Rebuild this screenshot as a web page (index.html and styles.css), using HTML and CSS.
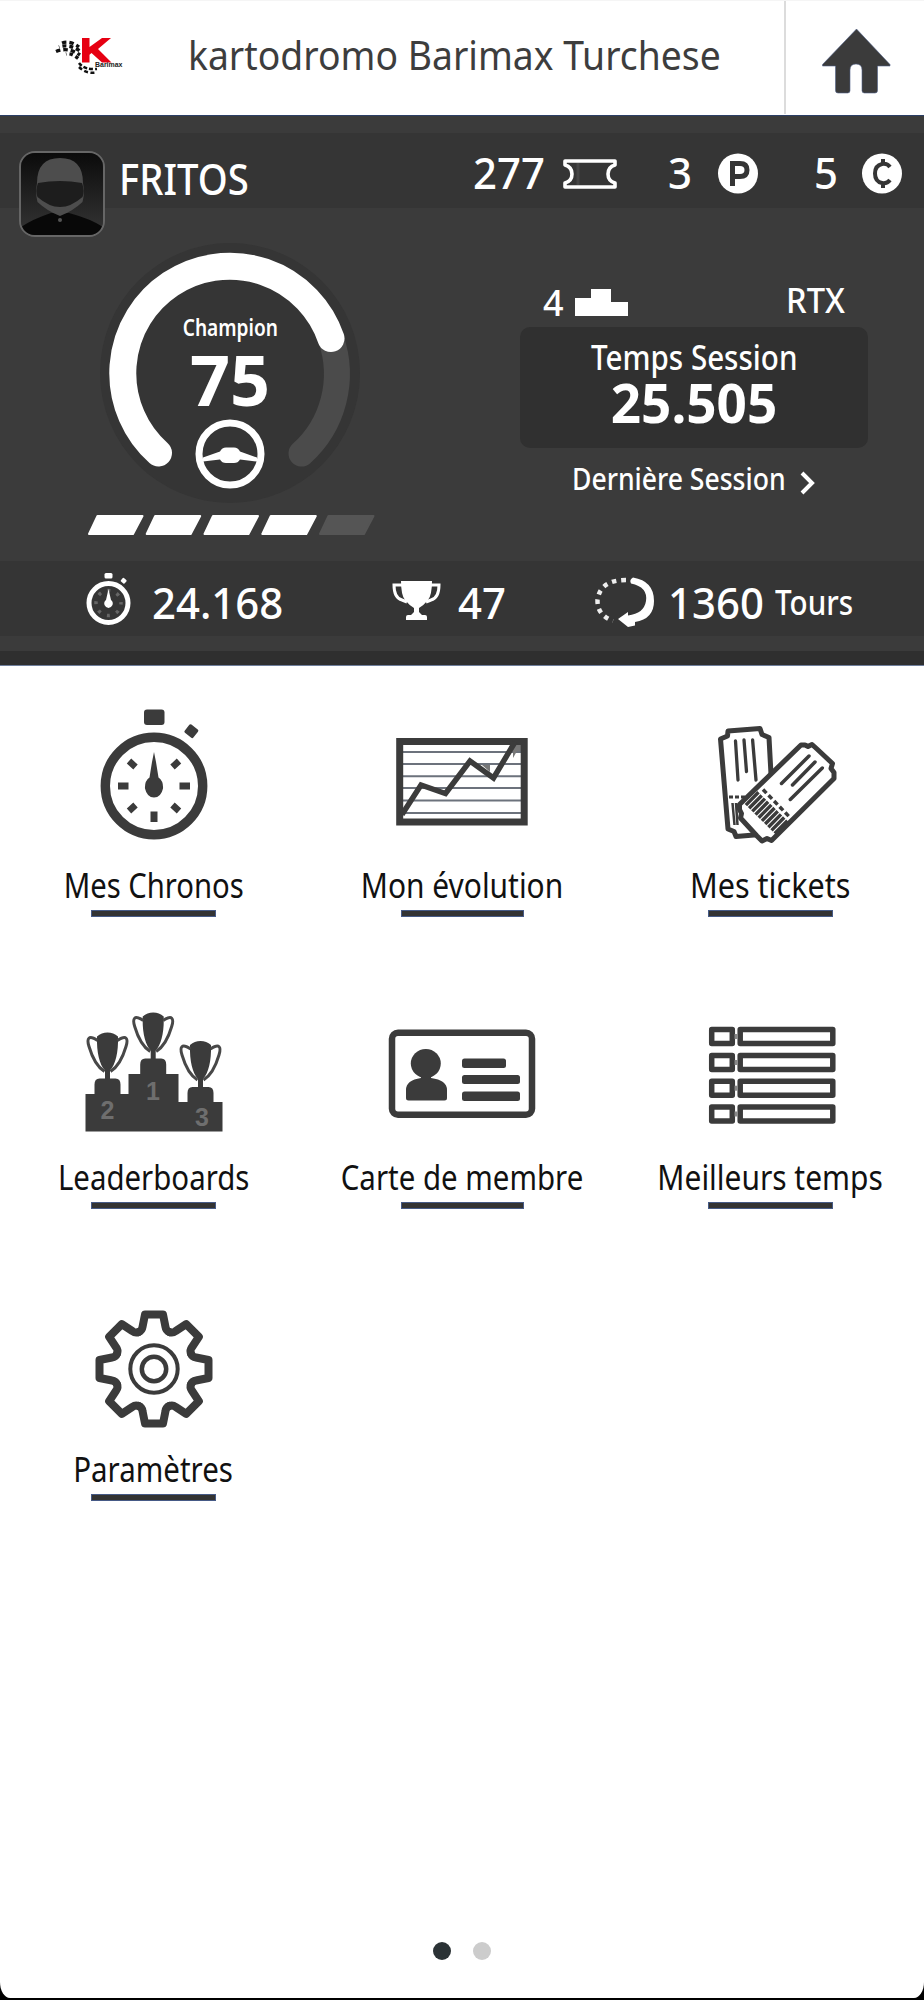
FILE: index.html
```html
<!DOCTYPE html>
<html lang="fr">
<head>
<meta charset="utf-8">
<title>kartodromo Barimax Turchese</title>
<link rel="stylesheet" href="styles.css">
</head>
<body>
<div class="app">
  <header class="header">
    <svg class="logo" width="68" height="38" viewBox="55 37 68 38">
      <g fill="none" stroke="#111" stroke-width="3.4">
        <path d="M62 43Q70 40 79 47" stroke-dasharray="4.500 3"/>
        <path d="M59 47Q69 43.500 80 51" stroke-dasharray="4 3" stroke-dashoffset="3.500"/>
        <path d="M56 51.500Q68 46.500 80 55" stroke-dasharray="4.500 3"/>
        <path d="M66 54Q72 52.500 80 60" stroke-dasharray="3.500 3" stroke-dashoffset="3"/>
        <path d="M79 63Q84 70 97 69" stroke-width="2.500" stroke-dasharray="4 2"/>
        <path d="M79 67Q86 74 96 72.500" stroke-width="2.500" stroke-dasharray="4 2.500"/>
      </g>
      <path fill="#e60012" d="M82 38h7.500v9L102 38h9L98 49l13.500 13.500H102L91.500 53l-2 1.700v7.800H82z"/>
      <text class="logo-text" x="95" y="66.500" textLength="27.500" lengthAdjust="spacingAndGlyphs">Barimax</text>
    </svg>
    <h1 class="title">kartodromo Barimax Turchese</h1>
    <a class="home">
      <svg width="70" height="66" viewBox="821 28 70 66"><path fill="#3b3b3b" stroke="#50618a" stroke-width=".6" d="M856.500 29 890 64.500V66h-12.500v24.500q0 2.500-2.500 2.500h-10.500q-2.500 0-2.500-2.500V70q0-6-6-6t-6 6v20.500q0 2.500-2.500 2.500H838q-2.500 0-2.500-2.500V66H822.500v-1.500z"/></svg>
    </a>
  </header>

  <section class="panel">
    <div class="band topbar">
      <div class="avatar">
        <svg width="82" height="82" viewBox="0 0 82 82">
          <defs><linearGradient id="bg" x1="0" y1="0" x2="0" y2="1"><stop offset="0" stop-color="#0b0b0b"/><stop offset="1" stop-color="#353535"/></linearGradient></defs>
          <rect width="82" height="82" fill="url(#bg)"/>
          <path fill="#080808" d="M0 74Q12 66 30 60h18q22 6 34 14v8H0z"/>
          <path fill="#4d4d4d" d="M16 30Q16 5 39 5t23 25q2 10-.5 19Q52 58 39 63 26 58 16.500 49q-2.500-9-.5-19z"/>
          <path fill="#1d1d1d" d="M17 30q22-4 44 0 3 8 .5 14Q50 54 39 54T16.500 44Q14 38 17 30z"/>
          <circle cx="39" cy="67" r="2" fill="#555"/>
        </svg>
      </div>
      <span class="name">FRITOS</span>
      <span class="num">277</span>
      <svg class="ico" width="54" height="30" viewBox="0 0 54 30"><path fill="#353535" stroke="#fff" stroke-width="3.600" stroke-linejoin="round" d="M2 2h50v4q-7 2-7 9t7 9v4H2v-4q7-2 7-9T2 6z"/><path stroke="#454545" stroke-width="3" d="M15 4v22"/></svg>
      <span class="num">3</span>
      <svg class="ico" width="41" height="41" viewBox="0 0 41 41"><circle cx="20" cy="20.500" r="20" fill="#fff"/><path d="M14.500 33V10.500H22q7 0 7 6.500t-7 6.500h-7.500" fill="none" stroke="#353535" stroke-width="5"/></svg>
      <span class="num">5</span>
      <svg class="ico" width="41" height="41" viewBox="0 0 41 41"><circle cx="20" cy="20.500" r="20" fill="#fff"/><path d="M28 14q-3-4-8-3-7 1.500-7 9.500t7 9.500q5 1 8-3M21 6v6M21 29v6" fill="none" stroke="#353535" stroke-width="4"/></svg>
    </div>

    <div class="middle">
      <div class="rank">
        <div class="gauge">
          <svg class="dial" width="260" height="260" viewBox="100 243 260 260" fill="none">
            <circle cx="230" cy="373" r="130" fill="#353535"/>
            <path d="M331 339A107 107 0 0 1 301.500 453.500" stroke="#4b4b4b" stroke-width="26" stroke-linecap="round"/>
            <path d="M158.500 453A107 107 0 1 1 331 338.500" stroke="#fff" stroke-width="27" stroke-linecap="round"/>
            <circle cx="230" cy="454" r="31" stroke="#fff" stroke-width="7"/>
            <path fill="#fff" d="M203 457.500l17-6q2-4 6-4h8q4 0 6 4l17 6v4l-17-2q-2 3.500-6 3.500h-8q-4 0-6-3.500l-17 2z"/>
          </svg>
          <div class="gauge-text">
            <span class="level">Champion</span>
            <strong class="score">75</strong>
          </div>
        </div>
        <svg class="segments" width="288" height="20" viewBox="0 0 288 20">
          <defs><path id="seg" stroke-width="2" stroke-linejoin="round" d="M9.500 1H54.500L45 19H1z"/></defs>
          <g fill="#fff" stroke="#fff"><use href="#seg"/><use href="#seg" x="57.700"/><use href="#seg" x="115.500"/><use href="#seg" x="173.300"/></g>
          <use href="#seg" x="231" fill="#555" stroke="#555"/>
        </svg>
      </div>
      <div class="session">
        <div class="session-top">
          <span class="place">4</span>
          <svg class="podium" width="53" height="27" viewBox="0 0 53 27"><path fill="#fff" d="M0 9h16V0h20v13h17v14H0z"/></svg>
          <span class="kart">RTX</span>
        </div>
        <div class="time-box">
          <span class="time-label">Temps Session</span>
          <strong class="time">25.505</strong>
        </div>
        <a class="last">
          <span class="last-text">Dernière Session</span>
          <svg class="chevron" width="16" height="24" viewBox="0 0 16 24"><path d="M2 2l10 10L2 22" fill="none" stroke="#fff" stroke-width="4"/></svg>
        </a>
      </div>
    </div>

    <div class="band stats">
      <svg width="46" height="52" viewBox="86 573 46 52">
        <circle cx="108.500" cy="603" r="19.500" fill="none" stroke="#fff" stroke-width="5"/>
        <rect x="104.500" y="573" width="8" height="5.500" rx="1.500" fill="#fff"/><rect x="121" y="578.500" width="5" height="4.500" rx="1" fill="#fff" transform="rotate(40 123.500 581)"/>
        <circle cx="108.500" cy="603" r="12.500" fill="none" stroke="#666" stroke-width="3.500" stroke-dasharray="3 6.820" stroke-dashoffset="1.500"/>
        <path fill="#fff" d="M108.500 589l2.500 11q2.500 2 1.500 5-1.500 3-4 3t-4-3q-1-3 1.500-5z"/>
      </svg>
      <span class="num">24.168</span>
      <svg width="49" height="39" viewBox="0 0 49 39"><path fill="#fff" d="M9 0h31q0 14-4 19-4 5-9 8v4l3 3h3q2 0 2 2v3H14v-3q0-2 2-2h3l3-3v-4q-5-3-9-8Q9 14 9 0z"/><path fill="none" stroke="#fff" stroke-width="3" d="M11 4H2q0 13 8 15l5 2M38 4h9q0 13-8 15l-5 2"/></svg>
      <span class="num">47</span>
      <svg width="60" height="50" viewBox="595 577 60 50" fill="none">
        <path d="M633 577.500q21 3.500 21 23.500 0 18-19 21v3.500l-7 1.500-10-8 10-7v3.500q16-2 18-14.500Q648 587 631 583.500q-2-4 2-6z" fill="#fff"/>
        <path d="M626 580Q600 580 597.500 600 597 615 613 621" stroke="#eee" stroke-width="4.500" stroke-dasharray="4.500 5"/>
      </svg>
      <span class="num">1360</span>
      <span class="unit">Tours</span>
    </div>
  </section>

  <main class="menu">
    <a class="item">
      <svg class="glyph" viewBox="73.500 697 160 160">
        <circle cx="153.500" cy="786" r="48.700" fill="none" stroke="#3b3b3b" stroke-width="9.400"/>
        <rect x="143.500" y="709.500" width="20.500" height="15.500" rx="3" fill="#3b3b3b"/>
        <rect x="185.500" y="726" width="11" height="10.500" rx="1.500" transform="rotate(38 191 731)" fill="#3b3b3b"/>
        <path d="M153.500 752l2 10 2.500 15.500q5 3.500 4.500 11-2 9-9 9t-9-9q-.5-7.500 4.500-11L151.500 762z" fill="#3b3b3b"/>
        <g stroke="#3b3b3b" stroke-width="7"><path d="M153.500 811.500v10.500M117.500 786h10.500M179 786h10.500"/><path d="M128.500 761l6.500 6M178.500 761l-6.500 6M128.500 811l6.500-6M178.500 811l-6.500-6" stroke-width="6.500"/></g>
      </svg>
      <span class="label fit-chronos">Mes Chronos</span><i class="bar"></i>
    </a>
    <a class="item">
      <svg class="glyph" viewBox="382 697 160 160" fill="none" stroke="#3b3b3b">
        <path stroke="#6c727c" stroke-width="2" d="M402 752h122M402 764h122M402 776.300h122M402 788h122M402 800.500h122M402 813h122"/>
        <path fill="#777" stroke="none" d="M513 744h10v7h-6l-4 7zM482 765h8v7z"/>
        <rect x="399.700" y="741.500" width="124.500" height="80.500" stroke-width="7"/>
        <path stroke-width="5.500" d="M402 814.500L421 785l24.500 8.500L470 761l23.500 17L515 742"/>
      </svg>
      <span class="label fit-evolution">Mon évolution</span><i class="bar bar-mid"></i>
    </a>
    <a class="item">
      <svg class="glyph" viewBox="690 697 160 160" fill="#fff" stroke="#3b3b3b" stroke-width="5" stroke-linejoin="round">
        <path d="M727 731l32-2.500 2 6 7 3 5 92-20 5.500-18 1.500-2-5-6-2.500-7.500-90 7-3z"/>
        <path stroke-width="3.300" stroke-linecap="round" d="M734.500 741l2.500 39M743 740l2.500 31.500M751.600 740l3.400 40"/>
        <path stroke-width="3" d="M728 797h22" stroke-dasharray="4 2"/><path stroke-width="2.500" d="M731.500 803l2 22M735 803l1.500 22"/>
        <path d="M800 745h4l3 1.500 4-2 5 4.500 15.500 14.500-1.500 5 3 4v6l-62.500 62-4.500-2-5 2.500-5-5-16.500-18 1-4.500-2-4v-5z"/>
        <g stroke-width="3.500" stroke-linecap="round"><path d="M808 756l-27.500 27.500M814 762l-22.500 23M821.300 768l-32 31.500"/></g>
        <path d="M762 789.500l26 27" stroke-dasharray="5 3" stroke-width="3.500"/>
        <path d="M750 797.500l32 31.500" stroke-width="18" stroke-dasharray="3.400 1.100"/>
      </svg>
      <span class="label fit-tickets">Mes tickets</span><i class="bar"></i>
    </a>
    <a class="item">
      <svg class="glyph" viewBox="73.500 989 160 160" fill="#3b3b3b">
        <defs><g id="cup"><path d="M-10.500 4Q-6 0 0 0t10.500 4C11 20 8 32 2.500 38v8h-5v-8C-8 32-11 20-10.500 4zM-13 61.500V52q0-6 5-6H8q5 0 5 6v9.500z"/><path fill="none" stroke="#484848" stroke-width="3" d="M-10 8C-19 2-21 6-18.500 14-15 26-11 34-3 39M10 8C19 2 21 6 18.500 14 15 26 11 34 3 39"/></g></defs>
        <use href="#cup" x="152.700" y="1012.500"/><use href="#cup" x="107" y="1032.500"/><use href="#cup" x="200" y="1041"/>
        <path d="M85 1094h43v-20h50v28h44v29.500H85z"/>
        <g class="steps"><text x="107" y="1119">2</text><text x="152.500" y="1100">1</text><text x="201.500" y="1126">3</text></g>
      </svg>
      <span class="label fit-leader">Leaderboards</span><i class="bar"></i>
    </a>
    <a class="item">
      <svg class="glyph" viewBox="382 989 160 160" fill="#3b3b3b">
        <rect x="392" y="1032.700" width="140" height="82" rx="6" fill="none" stroke="#3b3b3b" stroke-width="6.500"/>
        <ellipse cx="425.800" cy="1063.500" rx="15" ry="14.500"/>
        <path d="M421 1074h10v4q16 2 16 12v8q0 2.500-2.500 2.500h-36q-2.500 0-2.500-2.500v-8q0-10 15-12z"/>
        <rect x="462" y="1058.500" width="44" height="9.500" rx="2.500"/><rect x="462" y="1075" width="58" height="9" rx="2.500"/><rect x="462" y="1091.500" width="58" height="9.500" rx="2.500"/>
      </svg>
      <span class="label fit-carte">Carte de membre</span><i class="bar bar-mid"></i>
    </a>
    <a class="item">
      <svg class="glyph" viewBox="690 989 160 160">
        <defs><g id="row" fill="none" stroke="#3b3b3b" stroke-width="5.500" stroke-linejoin="round"><path d="M710.700 3h20.600v14h-20.600zM739.200 3h92.600v14h-92.600z"/><path stroke="#888" stroke-width="5" d="M733.500 10h3"/></g></defs>
        <use href="#row" y="1026.500"/><use href="#row" y="1052.500"/><use href="#row" y="1078.200"/><use href="#row" y="1104"/>
      </svg>
      <span class="label fit-temps">Meilleurs temps</span><i class="bar"></i>
    </a>
    <a class="item">
      <svg class="glyph" viewBox="-80 -88 160 160" fill="none" stroke="#3b3b3b" stroke-linejoin="round" stroke-linecap="round">
        <defs><path id="tooth" d="M-15.300-37Q-12-38.400-11.500-42L-9-54.500H9L11.500-42Q12-38.400 15.300-37"/></defs>
        <g stroke-width="8"><use href="#tooth"/><use href="#tooth" transform="rotate(45)"/><use href="#tooth" transform="rotate(90)"/><use href="#tooth" transform="rotate(135)"/><use href="#tooth" transform="rotate(180)"/><use href="#tooth" transform="rotate(225)"/><use href="#tooth" transform="rotate(270)"/><use href="#tooth" transform="rotate(315)"/></g>
        <circle r="23.700" stroke-width="4"/><circle r="12.200" stroke-width="4.500"/>
      </svg>
      <span class="label fit-param">Paramètres</span><i class="bar"></i>
    </a>
  </main>

  <nav class="dots"><i class="dot dot-on"></i><i class="dot"></i></nav>
</div>
</body>
</html>
```
FILE: styles.css
```css
* { box-sizing: border-box; }
body { margin: 0; background: #000; font-family: "Noto Sans", "Open Sans", sans-serif; }
svg { display: block; flex: none; }

.app {
  width: 924px; height: 1998px; background: #fff;
  border-radius: 0 0 10px 10px / 0 0 16px 16px;
  display: flex; flex-direction: column; overflow: hidden;
}

.header { height: 115px; display: flex; border-top: 1px solid #f5f5f5; flex: none; }
.logo { margin: 36px 0 0 55px; }
.logo-text { font: bold 6.500px "Liberation Sans", sans-serif; fill: #222; }
.title {
  margin: 27px 0 0 65px; width: 596px; height: 58px; line-height: 54px;
  font-size: 40px; font-weight: 400; color: #3d3d3d; white-space: nowrap;
  transform: scaleX(.933); transform-origin: left;
}
.home { width: 140px; height: 113px; border-left: 2px solid #dcdcdc; padding: 27px 0 0 35px; }

.panel {
  height: 550px; flex: none; background: #3b3b3b; color: #fff;
  border-top: 1px solid #2c3f66; border-bottom: 14px solid #2f2f2f;
  padding-top: 17px; box-shadow: 0 1px #6f7f9c;
}
.band { height: 75px; background: #353535; display: grid; }
.num {
  font-size: 43px; font-weight: 500; line-height: 75px; padding-top: 2px;
  transform: scaleX(.975); transform-origin: left;
}

.topbar {
  grid-template-columns: 100px 354px 90px 105px 49.500px 96.500px 48px 41px;
  padding-left: 19px; align-items: start;
}
.avatar {
  width: 86px; height: 86px; margin-top: 18px; position: relative; z-index: 1;
  border: 2px solid #666; border-radius: 16px; overflow: hidden;
}
.name {
  font-size: 43px; font-weight: 500; line-height: 75px; padding-top: 8px;
  transform: scaleX(.89); transform-origin: left;
}
.ico { margin-top: 20px; }
.ico[height="30"] { margin-top: 26px; }

.middle { height: 353px; display: flex; }
.rank { width: 520px; padding: 35px 0 0 88px; }
.gauge { display: grid; width: 260px; height: 260px; margin-left: 12px; }
.dial, .gauge-text { grid-area: 1 / 1; }
.gauge-text { padding-top: 71px; display: flex; flex-direction: column; align-items: center; }
.level { font-size: 23px; font-weight: 600; line-height: 26px; transform: scaleX(.83); }
.score { font-size: 70px; line-height: 60px; margin-top: 9px; }
.segments { margin-top: 12px; }

.session { width: 348px; padding-top: 76px; }
.session-top { height: 43px; display: flex; align-items: flex-start; padding-left: 23px; }
.place { width: 32px; font-size: 36px; font-weight: 500; line-height: 37px; }
.podium { margin-top: 5px; }
.kart { margin: -1px 0 0 158px; font-size: 34px; font-weight: 500; line-height: 34px; transform: scaleX(.96); transform-origin: left; }
.time-box {
  height: 121px; border-radius: 10px; background: #303030; padding-top: 10px;
  display: flex; flex-direction: column; align-items: center;
}
.time-label { font-size: 35px; font-weight: 500; line-height: 40px; transform: scaleX(.845); }
.time { font-size: 53px; line-height: 50px; margin-top: 1px; }
.last { display: flex; padding: 12px 0 0 52px; }
.last-text {
  width: 228px; font-size: 31px; font-weight: 500; line-height: 36px; white-space: nowrap;
  transform: scaleX(.857); transform-origin: left;
}
.chevron { margin-top: 11px; }

.stats {
  grid-template-columns: 66px 240px 66px 137px 73px 107px 80px;
  padding-left: 86px; align-items: start;
}
.stats svg { margin-top: 12px; }
.stats svg[height="39"] { margin-top: 20px; }
.stats svg[height="50"] { margin-top: 16px; }
.stats .num, .unit { padding-top: 4px; }
.unit {
  font-size: 34px; font-weight: 500; line-height: 75px;
  transform: scaleX(.87); transform-origin: left;
}

.menu { display: grid; grid-template-columns: 307px 310px 307px; row-gap: 72px; padding-top: 32px; }
.item { display: flex; flex-direction: column; align-items: center; height: 220px; }
.glyph { width: 160px; height: 160px; }
.label { margin-top: 7.5px; font-size: 34px; line-height: 40px; color: #111; white-space: nowrap; }
.fit-chronos { transform: scaleX(.86); }
.fit-evolution { transform: scaleX(.88); }
.fit-tickets { transform: scaleX(.9); }
.fit-leader { transform: scaleX(.865); }
.fit-carte { transform: scaleX(.866); }
.fit-temps { transform: scaleX(.88); }
.fit-param { transform: scaleX(.867); }
.bar { width: 125px; height: 7px; margin-top: 5.5px; background: #333; border: 1px solid #465a86; }
.bar-mid { width: 123px; }
.steps { font: bold 25px "Liberation Sans", sans-serif; fill: #6e6e6e; text-anchor: middle; }

.dots { margin-top: auto; padding: 0 1px 38px 0; display: flex; justify-content: center; gap: 22px; }
.dot { width: 18px; height: 18px; border-radius: 50%; background: #ccc; }
.dot-on { background: #2b3235; }
```
